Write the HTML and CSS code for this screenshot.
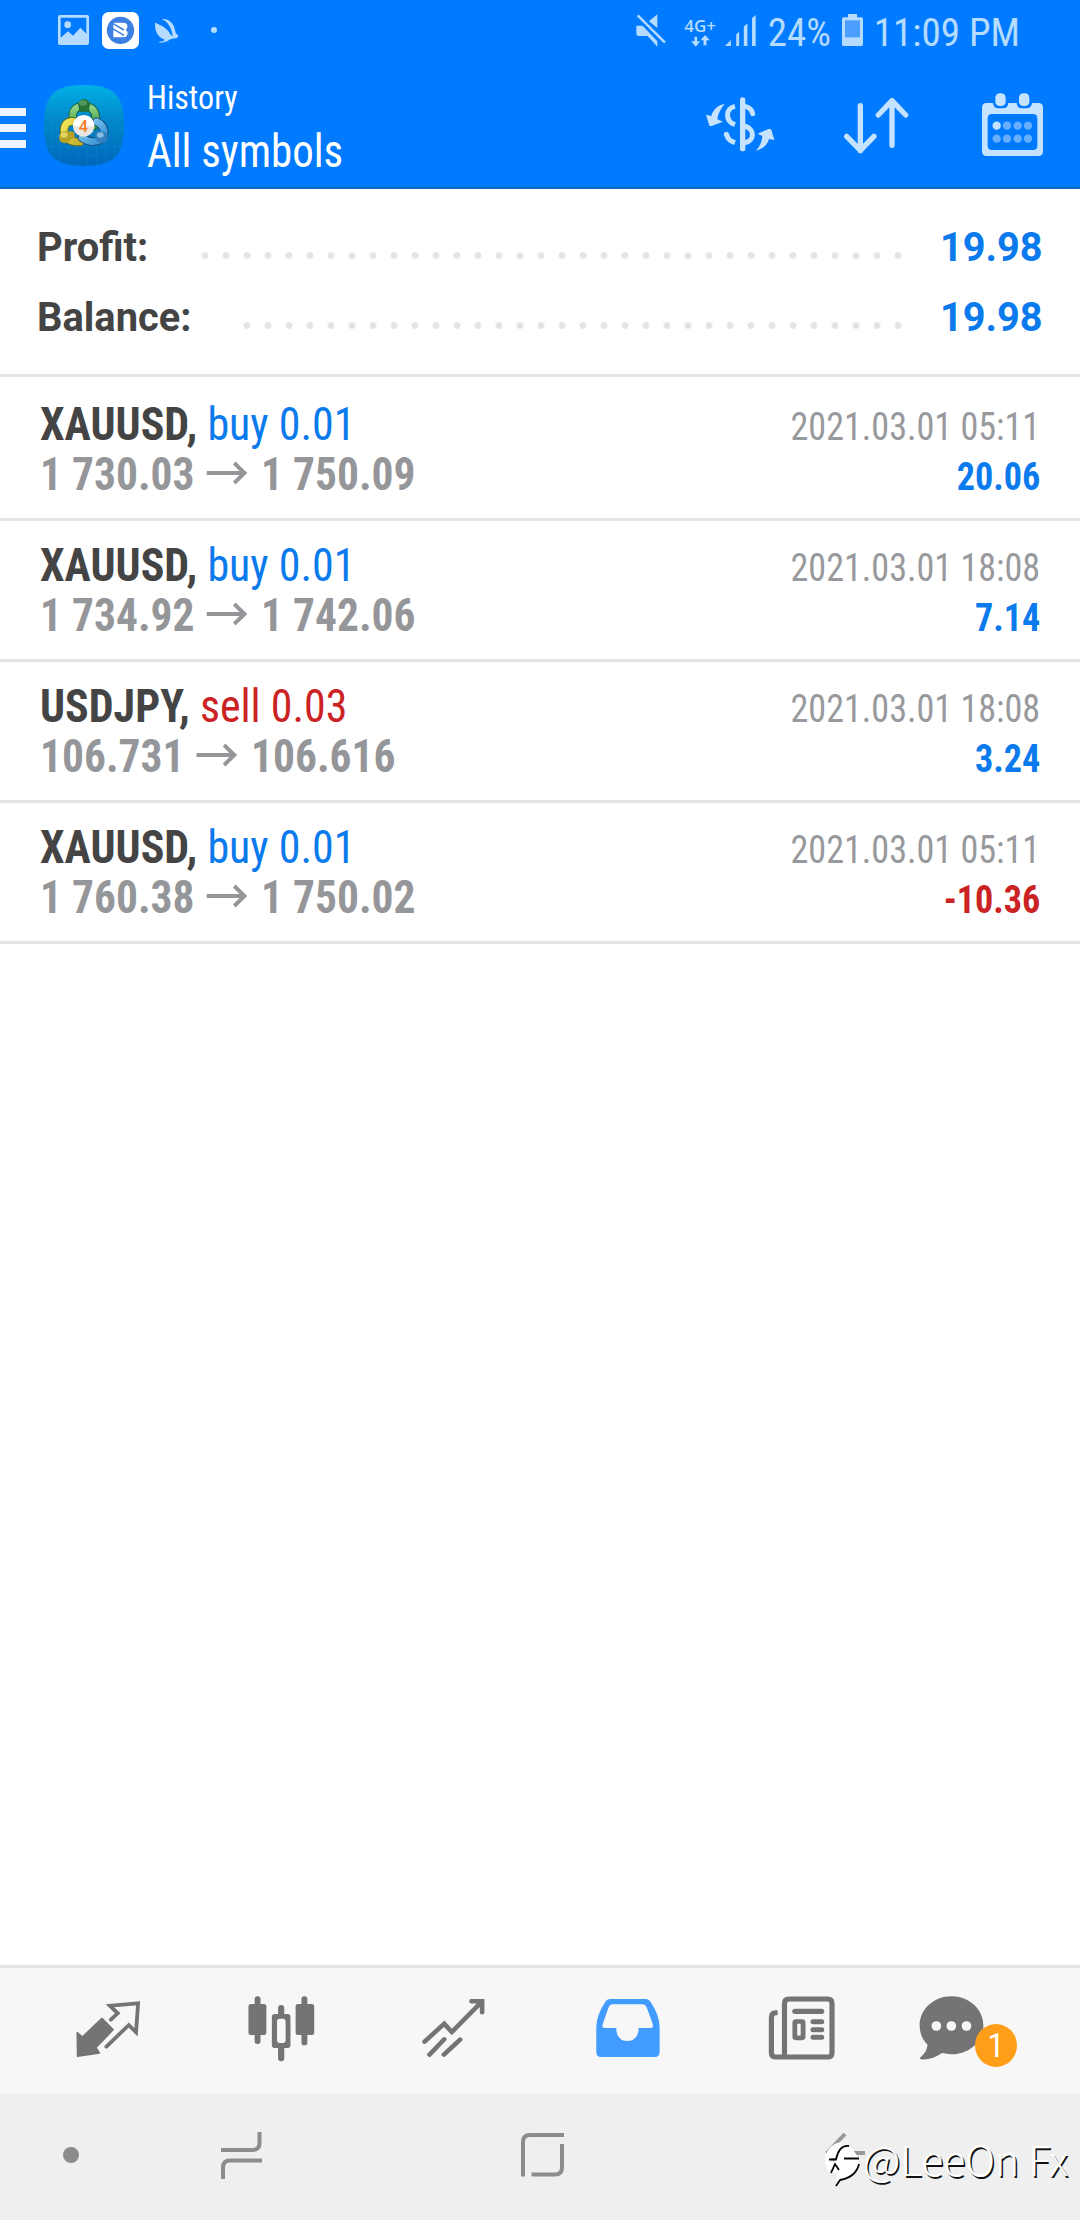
FILE: index.html
```
<!DOCTYPE html>
<html lang="en">
<head>
<meta charset="utf-8">
<title>History</title>
<link rel="stylesheet" href="styles.css">
</head>
<body>
<div class="screen">
  <header class="header">
    <div class="status">
      <svg class="st-picture" viewBox="0 0 93 90"><path fill="#b5dbff" fill-rule="evenodd" d="M6 0H87Q93 0 93 6V84Q93 90 87 90H6Q0 90 0 84V6Q0 0 6 0ZM8 8V68L30 49L45 62L67 38L85 56V8Z"/><circle cx="29" cy="29" r="10" fill="#b5dbff"/></svg>
      <svg class="st-app" viewBox="0 0 111 111"><rect width="111" height="111" rx="20" fill="#fff"/><circle cx="55.500" cy="55" r="41" fill="#3d7ee2"/><path d="M34 32H66Q78 34 76 45Q75 51 71 54Q79 59 76 68Q73 76 64 76H34Z" fill="#fff"/><path d="M32 34L66 54M32 50L66 70" stroke="#3d7ee2" stroke-width="4.500"/></svg>
      <svg class="st-bird" viewBox="0 0 72 74"><path fill="#b5dbff" d="M1 13C12 20 28 24 39 38C44 46 48 52 53 55L51 42C47 26 38 10 21 3C34 0 52 9 58 28L62 44C64 49 70 50 70 56C67 60 59 62 52 62L38 66L43 71L35 69L24 73L13 74V71L24 69L29 65C8 58-3 36 1 13Z"/></svg>
      <span class="st-more"></span>
      <div class="status-right">
        <svg class="st-mute" viewBox="0 0 90 99"><path fill="#b5dbff" d="M39 22L64 1V42ZM1 35H20L64 82V98L35 66H8Q1 66 1 57Z"/><path d="M5 4L87 86" stroke="#b5dbff" stroke-width="7"/></svg>
        <div class="network"><span>4G+</span><svg viewBox="0 0 56 36"><path fill="#b5dbff" d="M10 5H18V19H27L14 35L0 19H10ZM37 31V16H28L42 0L56 16H46V31Z"/></svg></div>
        <svg class="st-signal" viewBox="0 0 94 94"><path fill="#b5dbff" d="M0 94L18 76V94ZM34 59L43 51V94H34ZM57 35L68 26V94H57ZM82 9L93 0V94H82Z"/></svg>
        <span class="battery-text">24%</span>
        <svg class="st-battery" viewBox="0 0 63 96"><path fill="#b5dbff" d="M18 0H45V10H58Q63 10 63 15V91Q63 96 58 96H5Q0 96 0 91V15Q0 10 5 10H18Z"/><rect x="9" y="19" width="45" height="51" fill="#4c9fff"/></svg>
        <span class="clock">11:09 PM</span>
      </div>
    </div>
    <div class="appbar">
      <div class="menu"><i></i><i></i><i></i></div>
      <svg class="logo" viewBox="0 0 240 243">
        <defs>
          <linearGradient id="bg" x2="0" y2="1"><stop stop-color="#00b0e8"/><stop offset=".4" stop-color="#008acb"/><stop offset="1" stop-color="#0067ba"/></linearGradient>
          <linearGradient id="green" x2="0" y2="1"><stop stop-color="#93d487"/><stop offset="1" stop-color="#3a9d45"/></linearGradient>
          <linearGradient id="gold" x2="1" y2="1"><stop stop-color="#f4e65c"/><stop offset="1" stop-color="#c4b02c"/></linearGradient>
          <linearGradient id="blue" x2="1" y2="1"><stop stop-color="#8ecff2"/><stop offset="1" stop-color="#3390d2"/></linearGradient>
        </defs>
        <path fill="url(#bg)" d="M120 0C210 0 240 30 240 121S210 243 120 243 0 212 0 121 30 0 120 0Z"/>
        <path d="M22 36V207M49 12V230M76 4V239M103 0V243M130 0V243M157 3V240M184 9V234M211 25V218M30 22H210M12 49H228M4 76H236M0 103H240M0 130H240M2 157H238M7 184H233M22 211H218" stroke="#35afe0" stroke-opacity=".25" stroke-width="1.500"/>
        <g fill="none" stroke-linecap="round">
          <path d="M88 107C80 74 98 64 120 64S158 77 155 107L151 122" stroke="#1d5f3c" stroke-width="26"/>
          <path d="M88 107C80 74 98 64 120 64S158 77 155 107L151 122" stroke="url(#green)" stroke-width="20"/>
          <path d="M88 109C65 108 58 124 61 145Q70 172 108 171" stroke="#5f6921" stroke-width="26"/>
          <path d="M88 109C65 108 58 124 61 145Q70 172 108 171" stroke="url(#gold)" stroke-width="20"/>
          <path d="M158 110C176 118 182 133 180 149C170 174 140 176 114 158" stroke="#174d80" stroke-width="26"/>
          <path d="M158 110C176 118 182 133 180 149C170 174 140 176 114 158" stroke="url(#blue)" stroke-width="20"/>
        </g>
        <path d="M108 55L104 77Q120 85 137 77L131 55" fill="#286e36"/>
        <path d="M67 143Q82 135 91 143L93 158L73 166" fill="#b59d22"/>
        <path d="M151 141L171 137L179 161L153 164Q157 151 151 141" fill="#2d7fbb"/>
        <circle cx="120" cy="60" r="18" fill="#27743a"/><ellipse cx="117" cy="54" rx="12" ry="8" fill="#64a968" opacity=".7"/>
        <circle cx="63" cy="157" r="18" fill="#b5a423"/><ellipse cx="60" cy="150" rx="11" ry="8" fill="#f0e681" opacity=".7"/>
        <circle cx="173" cy="157" r="18" fill="#347fbd"/><ellipse cx="169" cy="150" rx="10" ry="8" fill="#9bd2ef" opacity=".8"/>
        <circle cx="119" cy="123" r="32" fill="#e9e6e4"/><path d="M87 123A32 32 0 0 1 151 123Z" fill="#fff"/>
        <text x="118" y="141" text-anchor="middle" class="logo-digit">4</text>
      </svg>
      <div class="titles"><span class="subtitle">History</span><span class="title">All symbols</span></div>
      <div class="actions">
        <svg viewBox="156 180 408 381"><g fill="none" stroke="#c5e2ff" stroke-width="15"><path d="M368 300V446" stroke-linecap="round" stroke-width="16"/><path d="M345 319C315 325 315 363 345 374"/><path d="M319 402C324 420 333 424 345 428"/><path d="M375 319C389 322 396 331 398 341" stroke-linecap="round"/><path d="M374 378C405 387 405 423 374 428"/></g><circle cx="319" cy="403" r="7.500" fill="#c5e2ff"/><path fill="#c5e2ff" d="M314 312C295 314 278 330 274 348L258 344L268 377Q270 379 275 378L309 365L292 358C294 342 302 326 314 312ZM408 452C429 447 443 434 447 417L463 420L454 389L448 386L413 401L427 408C426 425 420 439 408 452Z"/></svg>
        <svg viewBox="564 180 408 381"><path d="M721 317V452M680 409L721 451L762 409M816 436V303M775 345L816 302L857 345" fill="none" stroke="#c5e2ff" stroke-width="16" stroke-linecap="round" stroke-linejoin="round"/></svg>
        <svg viewBox="972 180 408 381"><path fill="#c5e2ff" fill-rule="evenodd" d="M1100 309H1119Q1120 325 1136 325H1148Q1164 325 1165 309H1190Q1191 325 1206 325H1218Q1235 325 1236 309H1255Q1269 309 1269 323V454Q1269 468 1255 468H1100Q1086 468 1086 454V323Q1086 309 1100 309ZM1116 342Q1103 342 1103 355V437Q1103 450 1116 450H1239Q1252 450 1252 437V355Q1252 342 1239 342Z"/><rect x="1126" y="280" width="31" height="38" rx="13" fill="#c5e2ff"/><rect x="1197" y="280" width="31" height="38" rx="13" fill="#c5e2ff"/><g fill="#66afff"><circle cx="1130" cy="377" r="12.500" fill="#c5e2ff"/><circle cx="1161" cy="377" r="12.500"/><circle cx="1193" cy="377" r="12.500"/><circle cx="1224" cy="377" r="12.500"/><circle cx="1130" cy="416" r="12.500"/><circle cx="1161" cy="416" r="12.500"/><circle cx="1193" cy="416" r="12.500"/><circle cx="1224" cy="416" r="12.500"/></g></svg>
      </div>
    </div>
  </header>

  <main class="content">
    <section class="summary">
      <div class="sum-row"><span class="sum-label profit">Profit:</span><span class="dots"></span><span class="sum-value">19.98</span></div>
      <div class="sum-row"><span class="sum-label balance">Balance:</span><span class="dots"></span><span class="sum-value">19.98</span></div>
    </section>
    <section class="deals">
      <article class="deal">
        <div class="left"><div class="line"><b>XAUUSD,</b> <span class="buy">buy 0.01</span></div>
        <div class="line prices"><span>1 730.03</span><svg class="arrow" viewBox="0 0 46 24" preserveAspectRatio="none"><path d="M0 12H42M30 2L41 12L30 22" fill="none" stroke="#959699" stroke-width="4.200"/></svg><span>1 750.09</span></div></div>
        <div class="right"><time>2021.03.01 05:11</time><span class="amount gain">20.06</span></div>
      </article>
      <article class="deal">
        <div class="left"><div class="line"><b>XAUUSD,</b> <span class="buy">buy 0.01</span></div>
        <div class="line prices"><span>1 734.92</span><svg class="arrow" viewBox="0 0 46 24" preserveAspectRatio="none"><path d="M0 12H42M30 2L41 12L30 22" fill="none" stroke="#959699" stroke-width="4.200"/></svg><span>1 742.06</span></div></div>
        <div class="right"><time>2021.03.01 18:08</time><span class="amount gain">7.14</span></div>
      </article>
      <article class="deal">
        <div class="left"><div class="line"><b>USDJPY,</b> <span class="sell">sell 0.03</span></div>
        <div class="line prices"><span>106.731</span><svg class="arrow" viewBox="0 0 46 24" preserveAspectRatio="none"><path d="M0 12H42M30 2L41 12L30 22" fill="none" stroke="#959699" stroke-width="4.200"/></svg><span>106.616</span></div></div>
        <div class="right"><time>2021.03.01 18:08</time><span class="amount gain">3.24</span></div>
      </article>
      <article class="deal">
        <div class="left"><div class="line"><b>XAUUSD,</b> <span class="buy">buy 0.01</span></div>
        <div class="line prices"><span>1 760.38</span><svg class="arrow" viewBox="0 0 46 24" preserveAspectRatio="none"><path d="M0 12H42M30 2L41 12L30 22" fill="none" stroke="#959699" stroke-width="4.200"/></svg><span>1 750.02</span></div></div>
        <div class="right"><time>2021.03.01 05:11</time><span class="amount loss">-10.36</span></div>
      </article>
    </section>
  </main>

  <nav class="tabs">
    <svg viewBox="61 54 503.800 378" preserveAspectRatio="none"><path fill="#747474" stroke="#747474" stroke-width="4" stroke-linejoin="round" d="M224 247L239 261L296 205L329 239L279 293L289 309L225 319Z"/><path d="M322 209L342 190L319 167L401 160L395 247L374 225L309 290" fill="none" stroke="#747474" stroke-width="11" stroke-linecap="round"/></svg>
    <svg viewBox="564.800 54 503.800 378" preserveAspectRatio="none"><g fill="#747474"><rect x="738" y="139" width="17" height="143" rx="8"/><rect x="720" y="162" width="52" height="93" rx="7"/><rect x="874" y="139" width="17" height="147" rx="8"/><rect x="857" y="162" width="54" height="93" rx="7"/><path d="M806 192V174Q806 165 815 165T824 174V192H834Q842 192 842 200V286Q842 294 834 294H824V325Q824 334 815 334T806 325V294H796Q788 294 788 286V200Q788 192 796 192ZM811 206Q803 206 803 215V270Q803 279 811 279H820Q828 279 828 270V215Q828 206 820 206Z" fill-rule="evenodd"/></g></svg>
    <svg viewBox="1068.600 54 503.800 378" preserveAspectRatio="none"><path d="M1233 275L1290 221L1312 246L1397 157M1369 154H1400V187M1247 314L1290 268M1289 314L1336 269" fill="none" stroke="#747474" stroke-width="13.500" stroke-linecap="round"/></svg>
    <svg viewBox="4.400 54 503.800 378" preserveAspectRatio="none"><path fill="#429cff" fill-rule="evenodd" d="M203 147H305Q315 147 320 156Q346 197 346 232V306Q346 321 332 321H176Q162 321 162 306V232Q162 197 188 156Q193 147 203 147ZM209 163Q201 163 197 174L181 222Q177 234 186 234H220C220 258 231 273 252 273S285 258 285 234H320Q329 234 326 222L309 174Q305 163 297 163Z"/></svg>
    <svg viewBox="508.200 54 503.800 378" preserveAspectRatio="none"><path d="M690 188H685Q672 188 672 202V308Q672 321 685 321H835Q848 321 848 308V160Q848 147 835 147H723Q710 147 710 160V321" fill="none" stroke="#747474" stroke-width="15"/><rect x="732.500" y="176" width="93" height="16" rx="8" fill="#747474"/><rect x="740" y="214.500" width="24" height="49" rx="3" fill="none" stroke="#747474" stroke-width="14"/><path d="M793 215H818M793 239H818M793 262H818" stroke="#747474" stroke-width="15" stroke-linecap="round"/></svg>
    <div class="chat"><svg viewBox="1012 54 503.800 378" preserveAspectRatio="none"><path fill="#747474" d="M1193 139C1245 139 1286 178 1286 226S1245 313 1193 313Q1179 312 1166 309Q1135 331 1105 328Q1099 325 1105 320C1116 311 1122 300 1124 284Q1101 261 1101 226C1101 178 1142 139 1193 139Z"/><g fill="#f7f7f7"><ellipse cx="1149.500" cy="228" rx="14" ry="14.500"/><ellipse cx="1193" cy="228" rx="14" ry="14.500"/><ellipse cx="1237" cy="228" rx="14" ry="14.500"/></g></svg><span class="badge">1</span></div>
  </nav>

  <footer class="sysnav">
    <span class="nav-dot"></span>
    <svg class="recents" viewBox="0 0 41 47"><path d="M0 18H31.500Q38.500 18 38.500 11V0M41 28.500H9Q2 28.500 2 35.500V47" fill="none" stroke="#8c8c8c" stroke-width="4"/></svg>
    <svg class="home" viewBox="0 0 43 44"><path d="M2 43.500V9Q2 2 9 2H43M41 11V34.500Q41 41.500 34 41.500H10.500" fill="none" stroke="#8c8c8c" stroke-width="4"/></svg>
    <svg class="back" viewBox="0 0 40 44"><path d="M20 2L3 20L22 41M3 21H40" fill="none" stroke="#999" stroke-width="4"/></svg>
  </footer>
  <div class="watermark"><svg viewBox="0 0 39 48"><path d="M18 2C7 3 1 12 1 20Q1 28 7 34L10 22H7V18H11C15 9 20 5 25 7C29 9 33 14 35 21H21L23 28L18 38L13 47L14 32Q9 34 6 31" fill="#fff"/><path d="M21 20H35C34 31 28 37 17 39L12 45L13 33Z" fill="#fff"/><path d="M12 46L16 40C27 38 33 33 35 24M5 19.500H12C14 10 18 5 25 6M20 18.500H35M7 33L11 24L15 30" fill="none" stroke="#050505" stroke-width="1.800"/></svg><span>@LeeOn Fx</span></div>
</div>
</body>
</html>
```
FILE: styles.css
```
* { box-sizing: border-box; }
body { margin: 0; background: #fff; }
svg { display: block; flex: none; }
.screen {
  position: relative;
  width: 1080px;
  height: 2220px;
  display: flex;
  flex-direction: column;
  background: #fff;
  overflow: hidden;
  font-family: "Roboto Condensed", Roboto, sans-serif;
}

.header { height: 189px; background: #007aff; border-bottom: 2px solid #1167c4; }
.status { height: 60px; display: flex; align-items: center; padding-left: 58px; color: #b5dbff; }
.st-picture { width: 31px; height: 30px; }
.st-app { width: 37px; height: 37px; margin-left: 13px; }
.st-bird { width: 24px; height: 25px; margin-left: 16px; }
.st-more { width: 6px; height: 6px; margin-left: 32px; border-radius: 50%; background: #b5dbff; }
.status-right { flex: 1; display: flex; align-items: center; justify-content: flex-end; padding-right: 60px; }
.st-mute { width: 30px; height: 33px; margin-right: 18px; }
.network { display: flex; flex-direction: column; align-items: center; width: 33px; font: 600 17px/15px "Open Sans", sans-serif; margin-right: 8px; padding-top: 4px; }
.network svg { width: 19px; height: 12px; margin-top: 2px; }
.st-signal { width: 31px; height: 31px; }
.battery-text, .clock { font-size: 39px; line-height: 60px; padding-top: 5px; white-space: nowrap; }
.battery-text { margin-left: 12px; }
.st-battery { width: 21px; height: 32px; margin: 0 11px 0 11px; }

.appbar { height: 127px; display: flex; color: #fff; }
.menu { width: 26px; padding-top: 48px; display: flex; flex-direction: column; gap: 8.500px; }
.menu i { height: 7.500px; background: #eef7ff; }
.logo { width: 80px; height: 81px; margin: 24.500px 0 0 18px; }
.logo-digit { font: 500 49px Roboto, sans-serif; fill: #f47d25; }
.titles { margin-left: 22.500px; padding-top: 17px; display: flex; flex-direction: column; white-space: nowrap; transform: scaleX(.943); transform-origin: left; }
.subtitle { font-size: 34px; line-height: 40px; }
.title { font-size: 45.500px; line-height: 69px; }
.actions { margin-left: auto; display: flex; }
.actions svg { width: 136px; height: 127px; }

.content { flex: 1; }
.summary { height: 188px; padding: 23px 38px 0 37px; border-bottom: 3px solid #e4e4e4; font-family: Roboto, sans-serif; font-weight: 700; font-size: 41px; }
.sum-row { height: 70px; line-height: 70px; display: flex; }
.sum-label { color: #444; transform: scaleX(.972); transform-origin: left; }
.profit { width: 157px; }
.balance { width: 199px; }
.dots {
  flex: 1;
  height: 7px;
  margin-top: 40px;
  background: radial-gradient(circle at center, #e4e4e4 3px, transparent 3.800px) right top / 21px 7px repeat-x;
}
.sum-value { width: 133.500px; text-align: right; color: #0a7aed; transform: scaleX(.968); transform-origin: right; }

.deal { height: 141px; padding: 19px 40px 0; border-bottom: 3px solid #e4e4e4; display: flex; justify-content: space-between; }
.deal:first-child { height: 144px; padding-top: 22px; }
.line { font-size: 47px; line-height: 50px; height: 50px; white-space: pre; color: #444; transform: scaleX(.935); transform-origin: left; }
.prices { display: flex; font-weight: 700; color: #959699; transform: scaleX(.925); }
.arrow { width: 46px; height: 24px; margin: 12px 13px 0; }
.buy, .gain { color: #0a7aed; }
.sell, .loss { color: #cb2324; }
.right { padding-top: 3px; display: flex; flex-direction: column; align-items: flex-end; font-size: 38.500px; line-height: 50px; color: #98999c; transform: scaleX(.938); transform-origin: right; }
.amount { font-weight: 700; }

.tabs { height: 129px; padding: 0 18px 0 21px; background: #f7f7f7; border-top: 3px solid #e4e4e4; display: grid; grid-template-columns: repeat(6, 173.500px); }
.tabs svg { width: 173.500px; height: 126px; }
.chat { position: relative; }
.badge { position: absolute; left: 86.500px; top: 56px; width: 42px; height: 43px; border-radius: 50%; background: #ff9e19; color: #fff; font-size: 34px; line-height: 43px; text-align: center; }

.sysnav { height: 126px; background: #efefef; display: grid; grid-template-columns: 142px 198px 404px 202px; justify-items: center; padding-top: 39px; }
.nav-dot { width: 16px; height: 16px; margin-top: 14px; border-radius: 50%; background: #8c8c8c; }
.recents { width: 41px; height: 47px; margin-top: -1px; }
.home { width: 43px; height: 44px; }
.back { width: 40px; height: 44px; margin-top: -1px; }
.watermark { position: absolute; left: 824px; top: 2136px; display: flex; align-items: flex-start; color: #fff; font: 300 41px/44px "Noto Sans CJK SC", sans-serif; white-space: nowrap; }
.watermark svg { width: 39px; height: 48px; margin-top: 4px; }
.watermark span { text-shadow: 1.500px 1.500px 0 #111; }
```
